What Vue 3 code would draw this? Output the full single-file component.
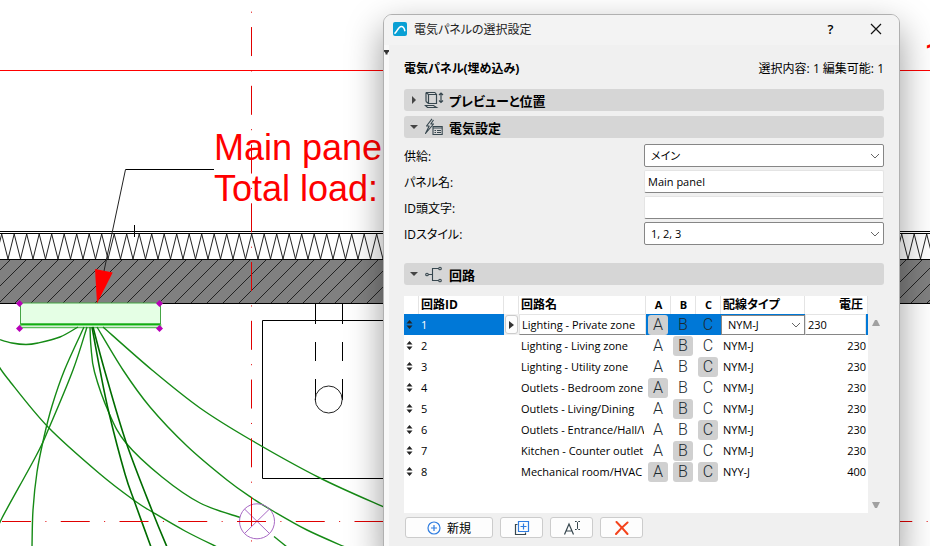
<script setup>
import { ref } from 'vue'

const supply = ref('メイン')
const panelName = ref('Main panel')
const idPrefix = ref('')
const idStyle = ref('1, 2, 3')

const phases = ['A', 'B', 'C']
const circuits = ref([
  { id: 1, name: 'Lighting - Private zone', on: 'A', cable: 'NYM-J', volt: 230 },
  { id: 2, name: 'Lighting - Living zone', on: 'B', cable: 'NYM-J', volt: 230 },
  { id: 3, name: 'Lighting - Utility zone', on: 'C', cable: 'NYM-J', volt: 230 },
  { id: 4, name: 'Outlets - Bedroom zone', on: 'A', cable: 'NYM-J', volt: 230 },
  { id: 5, name: 'Outlets - Living/Dining', on: 'B', cable: 'NYM-J', volt: 230 },
  { id: 6, name: 'Outlets - Entrance/Hall/W', on: 'C', cable: 'NYM-J', volt: 230 },
  { id: 7, name: 'Kitchen - Counter outlet', on: 'B', cable: 'NYM-J', volt: 230 },
  { id: 8, name: 'Mechanical room/HVAC', on: 'ABC', cable: 'NYY-J', volt: 400 }
])
const selected = ref(1)

function toggle(c, p) {
  c.on = c.on.includes(p) ? c.on.replace(p, '') : c.on + p
}

// Smooth curve through a list of points (Catmull-Rom to Bezier)
function smooth(pts) {
  let d = `M${pts[0]}`
  for (let i = 0; i < pts.length - 1; i++) {
    const a = pts[i - 1] || pts[i]
    const b = pts[i]
    const c = pts[i + 1]
    const e = pts[i + 2] || c
    const c1 = [b[0] + (c[0] - a[0]) / 6, b[1] + (c[1] - a[1]) / 6]
    const c2 = [c[0] - (e[0] - b[0]) / 6, c[1] - (e[1] - b[1]) / 6]
    d += ` C${c1} ${c2} ${c}`
  }
  return d
}

const wires = [
  [[78, 327], [60, 337], [38, 343], [26, 344.5], [12, 343], [-2, 339]],
  [[-2, 365], [8, 379], [48, 427], [100, 474], [135, 501], [154, 513], [185, 531], [217, 547]],
  [[84, 327], [64.5, 370], [52, 406], [44, 437], [37, 472], [33, 510], [32, 547]],
  [[87, 327], [73, 370], [49, 428], [36, 456], [2, 518], [-1, 528]],
  [[90, 327], [91, 347], [94.5, 372], [109, 413], [126, 443], [162, 477], [200, 503], [240, 517.5]],
  [[97, 327], [123, 370], [150, 407], [187, 446], [227, 480], [252, 498], [273, 511], [307, 530], [345, 547]],
  [[103, 327], [152, 370], [200, 408], [251, 440], [320, 478], [386, 508]],
  [[274, 536.5], [287, 547]]
].map(smooth)
const feeders = [
  [[92, 327], [100, 370], [109, 413], [125, 474], [135, 503], [151, 547]],
  [[93, 327], [104.5, 370], [126, 442], [153, 513], [167, 547]]
].map(smooth)

let insulation = 'M-10.8 234'
let hatch = ''
for (let x = -10.8; x < 2600; x += 12.5) insulation += `L${x + 6.3} 259L${x + 12.5} 234`
for (let s = 270; s < 2900; s += 16) hatch += `M${s - 303} 303L${s - 260} 260`
</script>

<template>
  <main class="workspace">
    <svg class="plan" aria-label="平面図">
      <path :d="insulation" class="thin" />
      <rect x="0" y="260" width="100%" height="43" fill="#808080" />
      <path :d="hatch" class="thin" />
      <g fill="#000">
        <rect x="0" y="231" width="100%" height="1" />
        <rect x="0" y="233" width="100%" height="1" />
        <rect x="0" y="259" width="100%" height="1" />
        <rect x="0" y="303" width="100%" height="1" />
      </g>
      <path d="M315.5 304V324M342.5 304V324M315.5 342V361M342.5 342V361M315.5 379V400M342.5 379V400" class="line" />
      <path d="M600 320.500H262.500V478.500H600" class="line" />
      <circle cx="328.700" cy="399.500" r="13.500" class="thin" />
      <path d="M134.500 225V237" class="line" />
      <path d="M214 169.500H125.500" class="line" />
      <path d="M125.500 169.500L104 271" class="thin" />

      <rect x="20.500" y="303" width="140" height="21" fill="#e5ffe5" stroke="#45a545" />
      <path d="M20.500 324.500H160.500" stroke="#10b010" stroke-width="2" />
      <path d="M20.500 324V327.500H160.500V324" fill="none" stroke="#5cc05c" stroke-width="1.500" />
      <path v-for="d in wires" :key="d" :d="d" class="wire" />
      <path v-for="d in feeders" :key="d" :d="d" class="wire feeder" />
      <path d="M95 269L112.700 272.500L97 303.500Z" fill="#f00" />
      <path v-for="p in [[19.5, 303.500], [159.5, 303.500], [19.5, 328.500], [159.5, 328.500]]" :key="p.join()"
        :d="`M${p[0] - 3.5} ${p[1]}l3.500-3.500 3.500 3.500-3.500 3.500z`" fill="#b800b8" />

      <g fill="none" stroke="#a868c4">
        <circle cx="257" cy="521.300" r="17.500" />
        <path d="M244.500 509L269.500 533.500M269.500 509L244.500 533.500" />
      </g>
      <rect x="0" y="70" width="100%" height="1" fill="#f00" />
      <line x1="251.500" y1="-31.700" x2="251.500" y2="100%" class="axis" />
      <line x1="2" y1="521.500" x2="100%" y2="521.500" class="axis" />
      <text x="214" y="160" class="note">Main panel</text>
      <text x="214" y="201" class="note">Total load:</text>
      <text x="924" y="68" class="note mark">1</text>
    </svg>

    <section class="dialog" role="dialog" aria-labelledby="dialog-title">
      <header class="titlebar">
        <svg class="logo" viewBox="0 0 14 14" aria-hidden="true">
          <rect width="14" height="14" rx="2" fill="#0aa0d4" />
          <path d="M2 11.200C4.200 9.500 5.500 4.400 8.300 4.400C10.300 4.400 11.300 6 11.800 8.700" fill="none" stroke="#fff" stroke-width="1.500" stroke-linecap="round" />
        </svg>
        <h1 id="dialog-title">電気パネルの選択設定</h1>
        <button class="caption" type="button" aria-label="ヘルプ">?</button>
        <button class="caption" type="button" aria-label="閉じる">
          <svg width="12" height="12" viewBox="0 0 12 12"><path d="M1 1L11 11M11 1L1 11" stroke="#111" stroke-width="1.200" /></svg>
        </button>
      </header>

      <div class="body">
        <div class="rail"><svg width="5" height="5" viewBox="0 0 5 5"><path d="M0 0H5V1.500L3.500 3V4.500H1.500V3L0 1.500Z" fill="#333" /></svg></div>
        <div class="content">
          <div class="summary">
            <h2>電気パネル(埋め込み)</h2>
            <p>選択内容: 1 編集可能: 1</p>
          </div>

          <button class="section" type="button" aria-expanded="false">
            <svg class="arrow" viewBox="0 0 8 8"><path d="M2 0L6 4L2 8Z" fill="#444" /></svg>
            <svg class="icon" viewBox="0 0 20 18" fill="none" stroke="#37474f" stroke-width="1.200">
              <path d="M4.500 3.500H12.500V12.500H4.500ZM4.500 3.500L2 1.500M12.500 3.500L11 1.500M4.500 12.500L2 10.500M2 1.500H11M2 1.500V10.500" />
              <path d="M1.500 14.500H9.500L12.500 16.500H3.500Z" />
              <path d="M17 2V11.500M15 4L17 2L19 4M15 9.500L17 11.500L19 9.500" />
            </svg>
            プレビューと位置
          </button>
          <button class="section" type="button" aria-expanded="true">
            <svg class="arrow" viewBox="0 0 8 8"><path d="M0 2H8L4 6Z" fill="#444" /></svg>
            <svg class="icon" viewBox="0 0 20 18" fill="none" stroke="#37474f" stroke-width="1.100">
              <path d="M8 .8L2.500 8H5.200L1.500 15.500L9.500 6H6.800L9.500 2" stroke-linejoin="round" />
              <path d="M9 8.500H18.200V16.500H9Z M9 10H18.200" />
              <path d="M10.500 12.500H12M13 12.500H17M10.500 14.500H12M13 14.500H17" />
            </svg>
            電気設定
          </button>

          <form class="fields" @submit.prevent>
            <label for="supply">供給:</label>
            <div class="select">
              <select id="supply" v-model="supply"><option>メイン</option></select>
              <svg viewBox="0 0 10 6"><path d="M1 1L5 5L9 1" /></svg>
            </div>
            <label for="panel-name">パネル名:</label>
            <input id="panel-name" v-model="panelName" type="text" />
            <label for="id-prefix">ID頭文字:</label>
            <input id="id-prefix" v-model="idPrefix" type="text" />
            <label for="id-style">IDスタイル:</label>
            <div class="select">
              <select id="id-style" v-model="idStyle"><option>1, 2, 3</option></select>
              <svg viewBox="0 0 10 6"><path d="M1 1L5 5L9 1" /></svg>
            </div>
          </form>

          <button class="section" type="button" aria-expanded="true">
            <svg class="arrow" viewBox="0 0 8 8"><path d="M0 2H8L4 6Z" fill="#444" /></svg>
            <svg class="icon" viewBox="0 0 20 18" fill="none" stroke="#37474f" stroke-width="1.100">
              <circle cx="3" cy="9.500" r="1.300" /><circle cx="16" cy="3.500" r="1.300" /><circle cx="16" cy="15.500" r="1.300" />
              <path d="M4.300 9.500H8.500M14.700 3.500H8.500V15.500H14.700" />
            </svg>
            回路
          </button>

          <div class="list">
            <div class="sheet">
              <table>
                <colgroup>
                  <col class="c-grip" /><col class="c-id" /><col class="c-grip" /><col />
                  <col class="c-phase" /><col class="c-phase" /><col class="c-phase" />
                  <col class="c-cable" /><col class="c-volt" />
                </colgroup>
                <thead>
                  <tr>
                    <th></th><th>回路ID</th><th></th><th>回路名</th>
                    <th v-for="p in phases" :key="p" class="mid">{{ p }}</th>
                    <th>配線タイプ</th><th class="num">電圧</th>
                  </tr>
                </thead>
                <tbody>
                  <tr v-for="c in circuits" :key="c.id" :class="{ active: c.id === selected }">
                    <td class="grip">
                      <svg width="7" height="9" viewBox="0 0 7 9"><path d="M.5 3.500L3.500 0L6.500 3.500ZM.5 5.500H6.500L3.500 9Z" fill="#222" /></svg>
                    </td>
                    <td>{{ c.id }}</td>
                    <template v-if="c.id === selected">
                      <td class="pick">
                        <button type="button" aria-label="選択"><svg width="5" height="8" viewBox="0 0 5 8"><path d="M0 0L5 4L0 8Z" fill="#333" /></svg></button>
                      </td>
                      <td class="edit"><input v-model="c.name" type="text" aria-label="回路名" /></td>
                    </template>
                    <template v-else>
                      <td></td>
                      <td><span class="name">{{ c.name }}</span></td>
                    </template>
                    <td v-for="p in phases" :key="p" class="phase">
                      <button type="button" :aria-pressed="c.on.includes(p)" @click="toggle(c, p)">{{ p }}</button>
                    </td>
                    <template v-if="c.id === selected">
                      <td class="edit">
                        <div class="select">
                          <select v-model="c.cable" aria-label="配線タイプ"><option>NYM-J</option><option>NYY-J</option></select>
                          <svg viewBox="0 0 10 6"><path d="M1 1L5 5L9 1" /></svg>
                        </div>
                      </td>
                      <td class="edit last"><input v-model="c.volt" type="text" aria-label="電圧" /></td>
                    </template>
                    <template v-else>
                      <td>{{ c.cable }}</td>
                      <td class="num">{{ c.volt }}</td>
                    </template>
                  </tr>
                </tbody>
              </table>
            </div>
            <div class="scroll">
              <button type="button" aria-label="上へ"><svg width="8" height="6" viewBox="0 0 8 6"><path d="M0 6L3 0H5L8 6Z" fill="#a0a0a0" /></svg></button>
              <button type="button" aria-label="下へ"><svg width="8" height="6" viewBox="0 0 8 6"><path d="M0 0H8L5 6H3Z" fill="#a0a0a0" /></svg></button>
            </div>
          </div>

          <div class="actions">
            <button class="new" type="button">
              <svg width="14" height="14" viewBox="0 0 14 14" fill="none" stroke="#2f7de1" stroke-width="1.200"><circle cx="7" cy="7" r="6" /><path d="M7 4V10M4 7H10" /></svg>
              新規
            </button>
            <button type="button" aria-label="複製">
              <svg width="16" height="16" viewBox="0 0 16 16" fill="none" stroke-width="1.200"><path d="M3.500 4.500H1.500V14.500H11.500V12.500" stroke="#37474f" /><path d="M4.500 1.500H14.500V11.500H4.500ZM9.500 3.500V9.500M6.500 6.500H12.500" stroke="#2f7de1" /></svg>
            </button>
            <button type="button" aria-label="名称変更">
              <svg width="18" height="16" viewBox="0 0 18 16" fill="none" stroke="#37474f" stroke-width="1.200"><path d="M1.500 14.500L6 4L10.500 14.500M3 11H9" /><path d="M12 1.500H13.500L14.500 2.500L15.500 1.500H17M14.500 2.500V8.500M12 9.500H13.500L14.500 8.500L15.500 9.500H17" stroke-width="1" /></svg>
            </button>
            <button type="button" aria-label="削除">
              <svg width="14" height="14" viewBox="0 0 14 14"><path d="M1.500 1C4 3.500 9 9 12.500 13M12.500 1.500C9 4.500 4 9.500 1 13" fill="none" stroke="#f4431c" stroke-width="2" stroke-linecap="round" /></svg>
            </button>
          </div>
        </div>
      </div>
    </section>
  </main>
</template>

<style>
body {
  background: #fff;
}
</style>

<style scoped>
.workspace {
  position: relative;
  height: 100vh;
  overflow: hidden;
  color: #000;
  font-family: "Open Sans", "Noto Sans CJK JP", sans-serif;
  font-size: 11px;
}
.workspace *,
.workspace *::before {
  box-sizing: border-box;
}
.plan {
  display: block;
  width: 100%;
  height: 100%;
}
.line {
  fill: none;
  stroke: #000;
}
.thin {
  fill: none;
  stroke: #222;
}
.wire {
  fill: none;
  stroke: #158a15;
  stroke-width: 1.4;
}
.feeder {
  stroke: #006c00;
  stroke-width: 1.6;
}
.axis {
  stroke: #e00000;
  stroke-dasharray: 29 14.4 1 14.35;
}
.note {
  fill: #f00;
  font-family: "Liberation Sans", sans-serif;
  font-size: 36px;
}
.mark {
  font-family: Roboto, sans-serif;
}

.dialog {
  position: absolute;
  top: 14px;
  left: 383px;
  right: 30px;
  min-height: 100vh;
  display: flex;
  flex-direction: column;
  border: 1px solid #b0b0b0;
  border-radius: 9px;
  overflow: hidden;
  background: #f0f0f0;
  box-shadow: 0 14px 36px rgba(0, 0, 0, 0.4);
}
h1,
h2,
p {
  margin: 0;
  font-size: 12px;
  font-weight: 400;
}
h1,
h2,
p,
label,
.section,
th,
select,
.new {
  font-feature-settings: "palt";
}
button,
input,
select {
  margin: 0;
  padding: 0;
  font-family: inherit;
  color: inherit;
}
.titlebar {
  display: flex;
  align-items: center;
  height: 30px;
  padding: 0 1px 2px 9px;
  background: #f3f3f3;
}
.logo {
  width: 14px;
  height: 14px;
  margin-right: 7px;
}
h1 {
  flex: 1;
  color: #222;
}
.caption {
  display: flex;
  align-items: center;
  justify-content: center;
  width: 45px;
  height: 28px;
  border: 0;
  background: none;
  font-size: 13px;
  font-weight: 600;
}
.body {
  flex: 1;
  display: flex;
}
.rail {
  width: 5px;
  padding-top: 5px;
  background: #f8f8f8;
}
.rail svg {
  display: block;
}
.content {
  flex: 1;
  min-width: 0;
  padding: 12px 15px 8px;
}
.summary {
  display: flex;
  align-items: center;
  justify-content: space-between;
  height: 22px;
  margin-bottom: 10px;
}
h2 {
  font-weight: 700;
}
.section {
  display: flex;
  align-items: center;
  width: 100%;
  height: 22px;
  margin-bottom: 5px;
  padding-left: 6px;
  border: 0;
  border-radius: 3px;
  background: #d6d6d6;
  font-size: 13px;
  font-weight: 700;
}
.arrow {
  width: 8px;
  height: 8px;
  margin-right: 6px;
}
.icon {
  width: 20px;
  height: 18px;
  margin-right: 5px;
}
.fields {
  display: grid;
  grid-template-columns: 1fr 1fr;
  gap: 3px 0;
  align-items: center;
  margin: 6px 0 18px;
}
label {
  font-size: 12px;
}
.fields input {
  width: 100%;
  height: 23px;
  padding: 0 3px;
  border: 1px solid #e4e4e4;
  border-bottom-color: #868686;
  border-radius: 2px;
  background: #fff;
  font-size: 11px;
}
.select {
  display: grid;
  align-items: center;
}
.select select {
  grid-area: 1 / 1;
  width: 100%;
  height: 23px;
  padding: 0 6px;
  border: 1px solid #868686;
  border-radius: 2px;
  background: #fff;
  appearance: none;
  font-size: 11px;
}
.select svg {
  grid-area: 1 / 1;
  justify-self: end;
  width: 10px;
  height: 6px;
  margin-right: 4px;
  pointer-events: none;
  fill: none;
  stroke: #666;
}

.list {
  display: flex;
  min-height: 217px;
  margin-top: 11px;
}
.sheet {
  flex: 1;
  min-width: 0;
  background: #fff;
}
table {
  width: 100%;
  table-layout: fixed;
  border-collapse: collapse;
}
.c-grip {
  width: 15px;
}
.c-id {
  width: 85px;
}
.c-phase {
  width: 25px;
}
.c-cable {
  width: 84px;
}
.c-volt {
  width: 63px;
}
th,
td {
  overflow: hidden;
  padding: 0 2px;
  text-align: left;
  white-space: nowrap;
}
th {
  height: 18px;
  font-size: 12px;
  line-height: 18px;
  background: linear-gradient(#e4e4e4, #e4e4e4) right / 1px 100% no-repeat;
}
th.mid {
  font-size: 11px;
  text-align: center;
}
th.num {
  padding-right: 5px;
}
td {
  height: 21px;
  line-height: 20px;
}
.num {
  text-align: right;
}
.name {
  display: block;
  overflow: hidden;
}
.grip svg {
  display: block;
}
.active td {
  background: #0078d7;
  color: #fff;
}
.active .pick {
  padding: 0 1px;
  background: #f0f0f0;
}
.pick button {
  display: flex;
  align-items: center;
  justify-content: center;
  width: 13px;
  height: 19px;
  border: 1px solid #ccc;
  border-radius: 3px;
  background: #fdfdfd;
}
.active .edit {
  padding: 0;
  color: #000;
}
.active .last {
  padding-right: 2px;
}
.edit input {
  display: block;
  width: 100%;
  height: 21px;
  padding: 0 2px;
  border: 1px solid #e4e4e4;
  border-bottom-color: #868686;
  background: #fff;
  font-size: 11px;
}
.edit .select select {
  height: 20px;
  border-radius: 0;
}
.phase button {
  display: block;
  width: 20px;
  height: 20px;
  border: 0;
  border-radius: 3px;
  background: none;
  color: #1c2a30;
  font-family: Roboto, sans-serif;
  font-size: 16px;
  font-weight: 300;
  line-height: 20px;
}
.phase button[aria-pressed="true"] {
  background: #d0d0d0;
}
.scroll {
  display: flex;
  flex-direction: column;
  justify-content: space-between;
  width: 16px;
  padding: 19px 0 0;
}
.scroll button {
  display: flex;
  align-items: center;
  justify-content: center;
  height: 16px;
  border: 0;
  background: none;
}
.actions {
  display: flex;
  gap: 7px;
  margin-top: 4px;
  padding-left: 1px;
}
.actions button {
  display: flex;
  align-items: center;
  justify-content: center;
  width: 43px;
  height: 21px;
  border: 1px solid #ccc;
  border-radius: 3px;
  background: #fdfdfd;
}
.actions .new {
  gap: 6px;
  width: 88px;
  font-size: 12px;
}
</style>
